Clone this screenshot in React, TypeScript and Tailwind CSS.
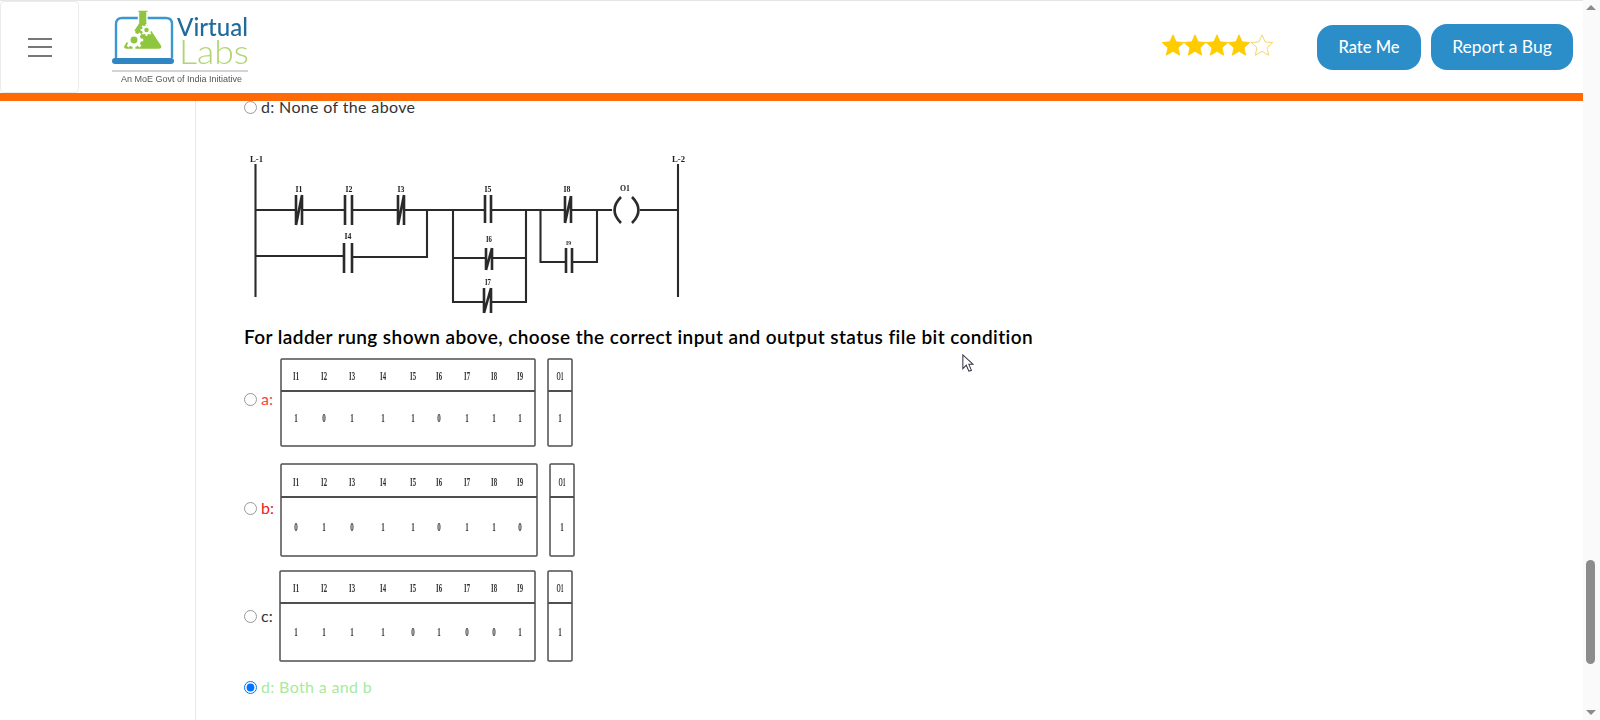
const FONT = "font-['Lato','Liberation_Sans',sans-serif]";

function Radio({ checked = false }: { checked?: boolean }) {
  return (
    <input
      type="radio"
      checked={checked}
      readOnly
      className={`m-0 h-[13px] w-[13px] shrink-0 accent-[#0075ff] ${checked ? "" : "opacity-75"}`}
    />
  );
}

function Star({ filled }: { filled: boolean }) {
  return (
    <svg viewBox="1 1.500 22 21" className="h-[22px] w-[22px] shrink-0">
      <path
        d="M12 1.800l3.100 7 7.700.8-5.800 5.100 1.700 7.500L12 18.300l-6.700 3.900 1.700-7.500-5.800-5.100 7.700-.8z"
        fill={filled ? "#ffcc00" : "none"}
        stroke={filled ? "#ffcc00" : "#f2d35c"}
        strokeWidth="0.900"
      />
    </svg>
  );
}

function Gear({ cx, cy, r, teeth }: { cx: number; cy: number; r: number; teeth: number }) {
  return (
    <g fill="none" stroke="#ffffff">
      <circle cx={cx} cy={cy} r={r * 0.62} strokeWidth={r * 0.42} />
      {Array.from({ length: teeth }).map((_, i) => {
        const a = (i / teeth) * Math.PI * 2;
        return (
          <line
            key={i}
            x1={cx + Math.cos(a) * r * 0.7}
            y1={cy + Math.sin(a) * r * 0.7}
            x2={cx + Math.cos(a) * r * 1.08}
            y2={cy + Math.sin(a) * r * 1.08}
            strokeWidth={r * 0.32}
          />
        );
      })}
    </g>
  );
}

function Logo() {
  return (
    <svg viewBox="0 0 150 90" className="h-[90px] w-[150px] shrink-0 blur-[0.25px]">
      <path d="M6 57V23q0-6 6-6h44q6 0 6 6v34" fill="none" stroke="#3b97cf" strokeWidth="2.400" />
      <path
        d="M27.500 9h11v2.500H37V22l14.500 22q2 4-3 4.500H17q-5-.5-3-4.500L28.500 22V11.500h-1z"
        fill="#8fc63f"
        stroke="#ffffff"
        strokeWidth="1.400"
      />
      <Gear cx={24} cy={39} r={8.500} teeth={8} />
      <Gear cx={36.500} cy={29} r={5.500} teeth={8} />
      <rect x="2" y="57" width="62" height="6" rx="3" fill="#3085c3" />
      <text x="67" y="35" textLength="71" lengthAdjust="spacingAndGlyphs" fontFamily="Lato, sans-serif" fontSize="25" fontWeight="500" fill="#1f6b9c">Virtual</text>
      <text x="69" y="63" textLength="70" lengthAdjust="spacingAndGlyphs" fontFamily="Lato, sans-serif" fontSize="33" fontWeight="300" fill="#b0d674">Labs</text>
      <rect x="2" y="69.500" width="136" height="1" fill="#aaaaaa" />
      <text x="11" y="81" textLength="121" lengthAdjust="spacingAndGlyphs" fontFamily="'Liberation Sans', sans-serif" fontSize="8.500" fill="#555555">An MoE Govt of India Initiative</text>
    </svg>
  );
}

const TL = { fontFamily: "'Liberation Serif', serif", fill: "#222222", textAnchor: "middle" as const };

function Diagram() {
  const w = "#2a2a2a";
  const no = (x1: number, x2: number, y1: number, y2: number) => (
    <path stroke={w} strokeWidth="2.600" d={`M${x1} ${y1}V${y2}M${x2} ${y1}V${y2}`} />
  );
  const nc = (x1: number, x2: number, y1: number, y2: number) => (
    <path stroke={w} strokeWidth="2.600" fill="none" d={`M${x1} ${y1}V${y2}M${x2} ${y1}V${y2}M${x1} ${y2}L${x2} ${y1}`} />
  );
  const label = (x: number, y: number, t: string, len: number, size = 9) => (
    <text x={x} y={y} fontSize={size} textLength={len} lengthAdjust="spacingAndGlyphs">{t}</text>
  );
  return (
    <svg viewBox="244 148 450 172" className="block h-[172px] w-[450px] blur-[0.5px]">
      <g stroke={w} strokeWidth="2.100" fill="none">
        <path d="M255.500 164V297M678 164V297" />
        <path d="M255.500 210H296M303 210H345M352 210H398M404 210H485M491 210H565M571 210H612" />
        <path d="M640 210H678" />
        <path d="M255.500 256H344M352 257H427V210" />
        <path d="M453 210V302H484M491 302H526V210" />
        <path d="M453 258H485M492 258H526" />
        <path d="M540.500 210V262H566M572 262H597V210" />
        <path d="M621 197Q608 210 621 223M632 197Q645 210 632 223" strokeWidth="2.600" />
      </g>
      {nc(296, 302, 195, 225)}
      {no(345, 352, 195, 225)}
      {nc(398, 404, 195, 225)}
      {no(344, 352, 243, 273)}
      {no(485, 491, 195, 223)}
      {nc(486, 492, 248, 270)}
      {nc(484, 491, 288, 313)}
      {nc(565, 571, 196, 223)}
      {no(566, 572, 248, 273)}
      <g {...TL} fontWeight="700">
        {label(256.500, 162, "L-1", 13)}
        {label(678.500, 162, "L-2", 13)}
        {label(299, 192, "I1", 7)}
        {label(349, 192, "I2", 7)}
        {label(401, 192, "I3", 7)}
        {label(348, 239, "I4", 7)}
        {label(488, 192, "I5", 7)}
        {label(489, 242, "I6", 6, 8)}
        {label(488, 285, "I7", 6, 8)}
        {label(567, 192, "I8", 7)}
        {label(568.500, 245, "I9", 5, 7)}
        {label(625, 191, "O1", 10)}
      </g>
    </svg>
  );
}

const NAMES = ["I1", "I2", "I3", "I4", "I5", "I6", "I7", "I8", "I9"];
const XS = [296, 324, 352, 383, 413, 439, 467, 494, 520];

function BitTable({
  vb, x1, x2, sx1, sx2, y1, y2, dy, ly, vy, bits, out,
}: {
  vb: string; x1: number; x2: number; sx1: number; sx2: number; y1: number; y2: number;
  dy: number; ly: number; vy: number; bits: string; out: string;
}) {
  const [, , vw, vh] = vb.split(" ").map(Number);
  return (
    <svg viewBox={vb} width={vw} height={vh} className="block shrink-0 blur-[0.35px]">
      <g fill="none" stroke="#4f4f4f" strokeWidth="1.500">
        <rect x={x1} y={y1} width={x2 - x1} height={y2 - y1} rx="1" />
        <rect x={sx1} y={y1} width={sx2 - sx1} height={y2 - y1} rx="1" />
        <path d={`M${x1} ${dy}H${x2}M${sx1} ${dy}H${sx2}`} strokeWidth="1.800" />
      </g>
      <g {...TL} fontSize="12" fontWeight="700" fill="#333333">
        {NAMES.map((n, i) => (
          <text key={n} x={XS[i]} y={ly} textLength="6" lengthAdjust="spacingAndGlyphs">{n}</text>
        ))}
        <text x={(sx1 + sx2) / 2} y={ly} textLength="7" lengthAdjust="spacingAndGlyphs">O1</text>
        {bits.split("").map((b, i) => (
          <text key={i} x={XS[i]} y={vy} textLength="3.500" lengthAdjust="spacingAndGlyphs">{b}</text>
        ))}
        <text x={(sx1 + sx2) / 2} y={vy} textLength="3.500" lengthAdjust="spacingAndGlyphs">{out}</text>
      </g>
    </svg>
  );
}

export default function App() {
  return (
    <div className={`flex h-[720px] w-[1600px] overflow-hidden bg-white ${FONT}`}>
      <div className="relative flex w-[1583px] flex-col">
        <header className="flex h-[93px] shrink-0 items-stretch border-t border-[#e6e6e6]">
          <button className="flex h-[92px] w-[79px] shrink-0 flex-col items-center justify-center gap-[6.5px] rounded-[4px] border border-[#ececec] bg-white">
            <span className="block h-[2px] w-[24px] bg-[#777777]" />
            <span className="block h-[2px] w-[24px] bg-[#777777]" />
            <span className="block h-[2px] w-[24px] bg-[#777777]" />
          </button>
          <div className="ml-[31px] shrink-0 self-start">
            <Logo />
          </div>
          <div className="ml-auto mr-[10px] flex items-center">
            <div className="mb-[5px] flex items-center">
              <Star filled />
              <Star filled />
              <Star filled />
              <Star filled />
              <span className="ml-[1px]">
                <Star filled={false} />
              </span>
            </div>
            <button className="ml-[44px] flex h-[45px] w-[104px] items-center justify-center rounded-[16px] bg-[#2b8ec9] text-[16.500px] font-medium text-white">
              Rate Me
            </button>
            <button className="ml-[10px] flex h-[46px] w-[142px] items-center justify-center rounded-[16px] bg-[#2b8ec9] text-[17.500px] text-white">
              Report a Bug
            </button>
          </div>
        </header>
        <div className="h-[8px] shrink-0 bg-[#ff6a06]" />
        <div className="flex min-h-0 flex-1">
          <aside className="w-[196px] shrink-0 border-r border-[#e8e8e8]" />
          <main className="min-w-0 flex-1 pl-[48px] text-[16px] text-[#333333]">
            <div className="flex h-[12px] items-center">
              <Radio />
              <span className="ml-[4px] tracking-[0.35px]">d: None of the above</span>
            </div>
            <div className="mt-[35px]">
              <Diagram />
            </div>
            <h2 className="mt-[-1px] h-[36px] text-[19px] leading-[35px] font-semibold tracking-[0.42px] text-black">
              For ladder rung shown above, choose the correct input and output status file bit condition
            </h2>
            <div className="flex h-[95px] items-center">
              <div className="mb-[7px] flex w-[31px] items-center gap-[4px] text-[#ef4444]">
                <Radio />
                <span>a:</span>
              </div>
              <BitTable vb="275 355 305 95" x1={281} x2={535} sx1={548} sx2={572} y1={359} y2={446} dy={391} ly={380} vy={422} bits="101110111" out="1" />
            </div>
            <div className="mt-[10px] flex h-[100px] items-center">
              <div className="mb-[4px] flex w-[31px] items-center gap-[4px] text-[#ef2020]">
                <Radio />
                <span>b:</span>
              </div>
              <BitTable vb="275 460 305 100" x1={281} x2={537} sx1={550} sx2={574} y1={464} y2={556} dy={497} ly={486} vy={531} bits="010110110" out="1" />
            </div>
            <div className="mt-[7px] flex h-[98px] items-center">
              <div className="flex w-[31px] items-center gap-[4px] text-[#333333]">
                <Radio />
                <span>c:</span>
              </div>
              <BitTable vb="275 567 305 98" x1={280} x2={535} sx1={548} sx2={572} y1={571} y2={661} dy={603} ly={592} vy={636} bits="111101001" out="1" />
            </div>
            <div className="mt-[14px] flex h-[16px] items-center">
              <Radio checked />
              <span className="ml-[4px] tracking-[0.35px] text-[#a6eba0]">d: Both a and b</span>
            </div>
          </main>
        </div>
        <svg viewBox="0 0 14 22" className="absolute left-[962px] top-[354px] h-[19px] w-[12px]">
          <path d="M1 1v16l4-4 3 7 3-1-3-7h5z" fill="#ffffff" stroke="#333344" strokeWidth="1.200" />
        </svg>
      </div>
      <div className="flex w-[17px] shrink-0 flex-col items-center bg-[#fafafa] pt-[5px] pr-[2px] pb-[5px]">
        <div className="h-0 w-0 border-x-[5px] border-b-[5px] border-x-transparent border-b-[#8c8c8c]" />
        <div className="mt-[550px] h-[104px] w-[9px] rounded-full bg-[#8c8c8c]" />
        <div className="mt-auto h-0 w-0 border-x-[5px] border-t-[5px] border-x-transparent border-t-[#8c8c8c]" />
      </div>
    </div>
  );
}
